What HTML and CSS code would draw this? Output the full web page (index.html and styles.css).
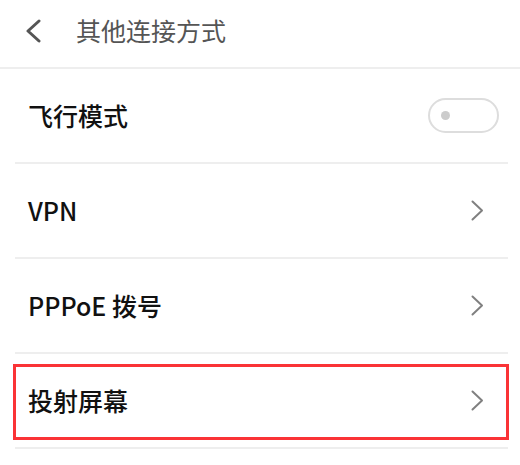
FILE: index.html
```html
<!DOCTYPE html>
<html lang="zh-CN">
<head>
<meta charset="utf-8">
<title>其他连接方式</title>
<link rel="stylesheet" href="styles.css">
</head>
<body>
<header class="header">
  <svg class="back" width="18" height="24" viewBox="0 0 18 24"><path d="M15 2 L4 12 L15 22" fill="none" stroke="#555" stroke-width="3" stroke-linecap="round" stroke-linejoin="round"/></svg>
  <span class="title">其他连接方式</span>
</header>
<ul class="list">
  <li class="row">
    <span class="label">飞行模式</span>
    <span class="toggle"><span class="dot"></span></span>
  </li>
  <li class="row">
    <span class="label">VPN</span>
    <svg class="chev" width="13" height="21" viewBox="0 0 13 21"><path d="M1.5 1.5 L11 10.5 L1.5 19.5" fill="none" stroke="#808080" stroke-width="2" stroke-linecap="round" stroke-linejoin="round"/></svg>
  </li>
  <li class="row">
    <span class="label">PPPoE 拨号</span>
    <svg class="chev" width="13" height="21" viewBox="0 0 13 21"><path d="M1.5 1.5 L11 10.5 L1.5 19.5" fill="none" stroke="#808080" stroke-width="2" stroke-linecap="round" stroke-linejoin="round"/></svg>
  </li>
  <li class="row">
    <span class="label">投射屏幕</span>
    <svg class="chev" width="13" height="21" viewBox="0 0 13 21"><path d="M1.5 1.5 L11 10.5 L1.5 19.5" fill="none" stroke="#808080" stroke-width="2" stroke-linecap="round" stroke-linejoin="round"/></svg>
    <span class="highlight"></span>
  </li>
</ul>
</body>
</html>
```
FILE: styles.css
```css
html, body {
  margin: 0;
  padding: 0;
  background: #fff;
}
body {
  font-family: "Noto Sans CJK SC", "Noto Sans", sans-serif;
  width: 520px;
  height: 465px;
  overflow: hidden;
}
.header {
  height: 67px;
  border-bottom: 2px solid #eeeeee;
  display: flex;
  align-items: center;
  padding-left: 24px;
  box-sizing: content-box;
}
.back {
  display: block;
  margin-top: -6px;
}
.title {
  margin-left: 34px;
  font-size: 25px;
  color: #555;
  line-height: 1;
  margin-top: -6px;
}
.list {
  list-style: none;
  margin: 0 12px 0 15px;
  padding: 0;
}
.row {
  position: relative;
  height: 93px;
  border-bottom: 2px solid #eeeeee;
  display: flex;
  align-items: center;
  justify-content: space-between;
  padding: 0 24px 0 13px;
}
.label {
  font-size: 25px;
  font-weight: 500;
  color: #111;
  line-height: 1;
  margin-top: -1px;
}
.toggle {
  width: 67px;
  height: 31px;
  border: 2px solid #dddddd;
  border-radius: 18px;
  position: relative;
  margin-right: -15px;
  margin-bottom: 1px;
}
.dot {
  position: absolute;
  left: 11px;
  top: 11px;
  width: 9px;
  height: 9px;
  border-radius: 50%;
  background: #cccccc;
}
.chev {
  display: block;
}
.highlight {
  position: absolute;
  left: -2px;
  right: -1px;
  top: 10px;
  bottom: 7px;
  border: 3px solid #fa3336;
  pointer-events: none;
}
```
